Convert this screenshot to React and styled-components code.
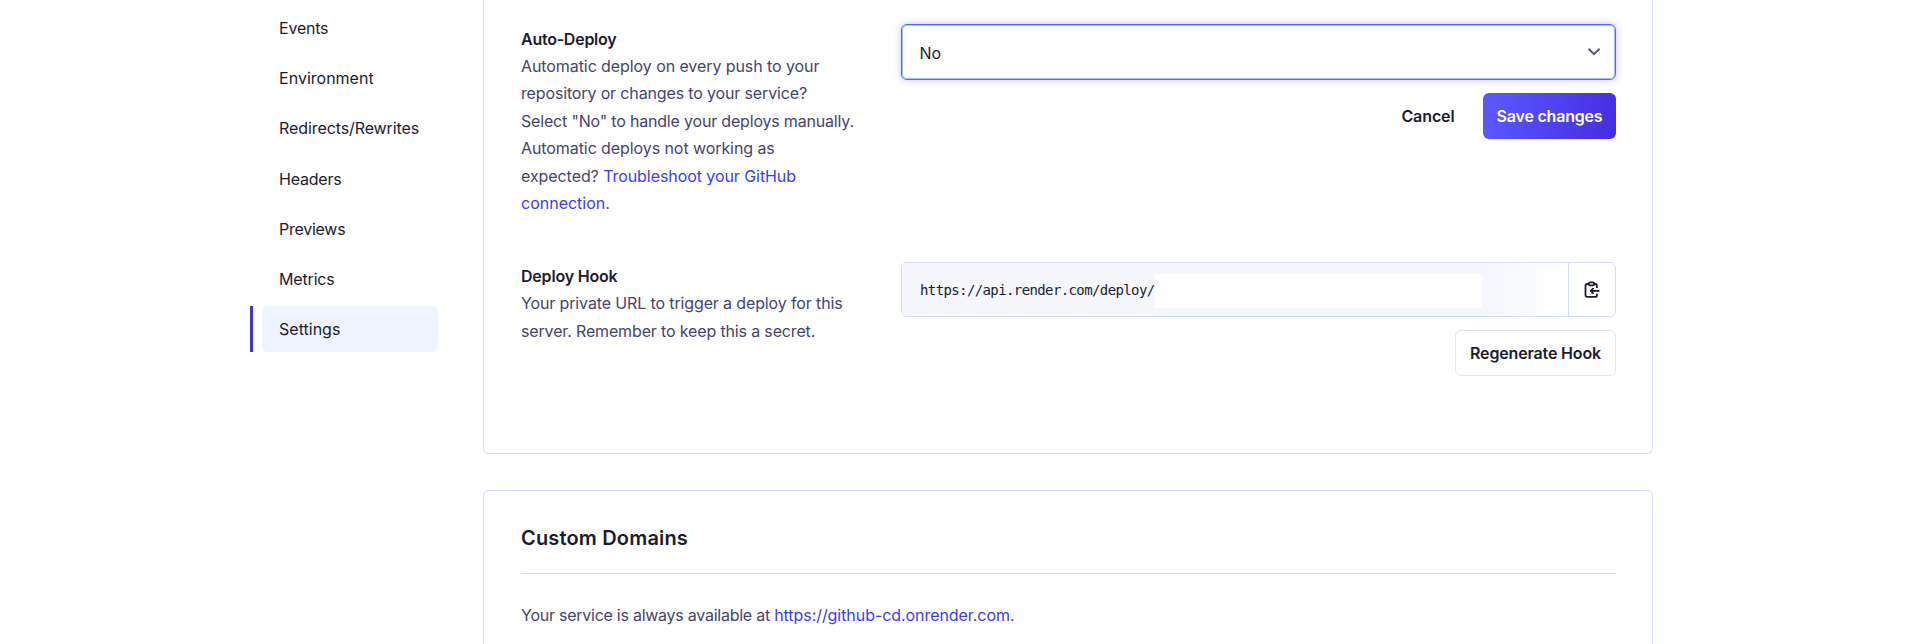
import React from 'react';
import styled, { createGlobalStyle } from 'styled-components';

const GlobalStyle = createGlobalStyle`
  * { box-sizing: border-box; }
  body {
    margin: 0;
    background: #fff;
    color: #1c1b2e;
    font: 400 16px/27.4px Inter, "Liberation Sans", sans-serif;
    overflow: hidden;
  }
  button { font: inherit; color: inherit; cursor: pointer; }
  a { color: #3c3cf0; text-decoration: none; }
`;

const Page = styled.div`
  display: flex;
  align-items: flex-start;
  gap: 45px;
  height: 644px;
  padding-left: 250px;
  overflow: hidden;
`;

const Sidebar = styled.nav`
  display: flex;
  flex-direction: column;
  gap: 4.2px;
  width: 188px;
  padding-top: 5px;
`;

const NavItem = styled.div`
  display: flex;
  gap: 8.6px;
  height: 46px;
  &::before {
    content: "";
    width: 3px;
    background: ${(p) => (p.$active ? '#4430e0' : 'transparent')};
  }
`;

const NavLink = styled.a`
  flex: 1;
  padding-left: 17.5px;
  border-radius: 6px;
  line-height: 46px;
  letter-spacing: ${(p) => p.$spacing || 0}px;
  color: #1c1b2e;
  background: ${(p) => (p.$active ? '#eef3ff' : 'transparent')};
`;

const Main = styled.main`
  display: flex;
  flex-direction: column;
  gap: 36px;
  width: 1170px;
`;

const Card = styled.section`
  padding: ${(p) => p.$padding};
  height: ${(p) => p.$height}px;
  flex: none;
  border: 1px solid #d2dcf5;
  border-top-width: ${(p) => (p.$cut ? 0 : 1)}px;
  border-radius: ${(p) => (p.$cut ? '0 0 6px 6px' : '6px')};
`;

const Setting = styled.div`
  display: grid;
  grid-template-columns: 350px 1fr;
  column-gap: 30px;
  height: ${(p) => p.$height}px;
`;

const Label = styled.h3`
  margin: 0;
  font-size: 16px;
  font-weight: 600;
  line-height: 27.4px;
  letter-spacing: ${(p) => p.$spacing || 0}px;
`;

const Line = styled.span`
  display: block;
  white-space: nowrap;
  color: #45446a;
  letter-spacing: ${(p) => p.$spacing || 0}px;
`;

const ServiceLink = styled.a`
  letter-spacing: -0.06px;
`;

const Info = styled.div`
  padding-top: ${(p) => p.$top}px;
`;

const Control = styled.div`
  display: flex;
  flex-direction: column;
  gap: 13px;
`;

const Select = styled.div`
  display: flex;
  align-items: center;
  justify-content: space-between;
  height: 56px;
  padding: 0 14px 0 17.5px;
  border: 1px solid #4a6ff0;
  border-radius: 6px;
  box-shadow: 0 0 0 1px #a9b9fa inset, 0 0 7px rgba(80, 70, 245, 0.35);
`;

const SelectValue = styled.span`
  padding-top: 3px;
`;

const Actions = styled.div`
  display: flex;
  justify-content: flex-end;
  gap: 16px;
`;

const Button = styled.button`
  height: 46px;
  width: ${(p) => p.$width}px;
  padding: 2px 0 0;
  border: ${(p) => (p.$outline ? '1px solid #dfe5fa' : '0')};
  border-radius: 6px;
  background: ${(p) => (p.$primary ? 'linear-gradient(105deg, #5957fd 10%, #452be0 100%)' : 'transparent')};
  color: ${(p) => (p.$primary ? '#fff' : '#1c1b2e')};
  font-weight: 600;
  letter-spacing: ${(p) => p.$spacing || 0}px;
  white-space: nowrap;
`;

const CopyField = styled.div`
  display: flex;
  height: 55px;
  border: 1px solid #d2dcf5;
  border-radius: 6px;
  overflow: hidden;
`;

const CopyValue = styled.div`
  display: flex;
  align-items: center;
  flex: 1;
  padding-left: 18px;
  background: linear-gradient(to right, #f5f7fc 88%, #fff 99%);
  font: 14px/20px "DejaVu Sans Mono", monospace;
  letter-spacing: -0.61px;
`;

const Url = styled.span`
  width: 235px;
  white-space: nowrap;
`;

const Redaction = styled.span`
  width: 327px;
  height: 34px;
  margin-top: 3px;
  background: #fff;
`;

const CopyButton = styled.button`
  display: grid;
  place-items: center;
  width: 47px;
  padding: 0 1px 0 0;
  border: 0;
  border-left: 1px solid #d2dcf5;
  background: #fff;
`;

const Heading = styled.h2`
  margin: 0;
  height: 46px;
  padding-top: 1px;
  font-size: 20px;
  font-weight: 600;
  line-height: 20px;
  letter-spacing: 0.17px;
`;

const Divider = styled.hr`
  height: 1px;
  margin: 0 0 28px;
  border: 0;
  background: #d2dcf5;
`;

const NAV = [
  ['Events', -0.25],
  ['Environment', 0],
  ['Redirects/Rewrites', -0.1],
  ['Headers', -0.22],
  ['Previews', -0.28],
  ['Metrics', -0.18],
  ['Settings', 0],
];

const ChevronIcon = () => (
  <svg width="14" height="10" viewBox="0 0 14 10" fill="none" stroke="#57566f" strokeWidth="1.9">
    <path d="M1.5 1.8 7 7.2l5.5-5.4" />
  </svg>
);

const ClipboardIcon = () => (
  <svg width="16" height="18" viewBox="0 0 16 18" fill="none" stroke="#1c1b2e" strokeWidth="1.8" strokeLinecap="round" strokeLinejoin="round">
    <path d="M4.6 3H3.2A1.7 1.7 0 0 0 1.5 4.7v9.5a1.7 1.7 0 0 0 1.7 1.7h8a1.7 1.7 0 0 0 1.7-1.7v-.9M10.4 3h.8a1.7 1.7 0 0 1 1.7 1.7v1.6" />
    <rect x="4.8" y="1.4" width="5.4" height="3" rx="1.2" />
    <path d="M14.7 9.9H6.8M9 7.6 6.7 9.9 9 12.2" />
  </svg>
);

export default function App() {
  return (
    <>
      <GlobalStyle />
      <Page>
        <Sidebar>
          {NAV.map(([name, spacing]) => (
            <NavItem key={name} $active={name === 'Settings'}>
              <NavLink $active={name === 'Settings'} $spacing={spacing}>{name}</NavLink>
            </NavItem>
          ))}
        </Sidebar>
        <Main>
          <Card $cut $height={454} $padding="24px 36px 0 37px">
            <Setting $height={238}>
              <Info $top={1.6}>
                <Label $spacing={-0.25}>Auto-Deploy</Label>
                <Line $spacing={-0.08}>Automatic deploy on every push to your</Line>
                <Line $spacing={-0.145}>repository or changes to your service?</Line>
                <Line $spacing={-0.185}>Select "No" to handle your deploys manually.</Line>
                <Line $spacing={-0.08}>Automatic deploys not working as</Line>
                <Line $spacing={-0.07}>expected? <a>Troubleshoot your GitHub</a></Line>
                <Line><a>connection.</a></Line>
              </Info>
              <Control>
                <Select>
                  <SelectValue>No</SelectValue>
                  <ChevronIcon />
                </Select>
                <Actions>
                  <Button $width={78} $spacing={-0.1}>Cancel</Button>
                  <Button $primary $width={133} $spacing={-0.2}>Save changes</Button>
                </Actions>
              </Control>
            </Setting>
            <Setting $height={120}>
              <Info $top={1}>
                <Label $spacing={-0.2}>Deploy Hook</Label>
                <Line $spacing={-0.13}>Your private URL to trigger a deploy for this</Line>
                <Line $spacing={-0.15}>server. Remember to keep this a secret.</Line>
              </Info>
              <Control>
                <CopyField>
                  <CopyValue>
                    <Url>https://api.render.com/deploy/</Url>
                    <Redaction />
                  </CopyValue>
                  <CopyButton aria-label="Copy">
                    <ClipboardIcon />
                  </CopyButton>
                </CopyField>
                <Actions>
                  <Button $outline $width={161} $spacing={-0.16}>Regenerate Hook</Button>
                </Actions>
              </Control>
            </Setting>
          </Card>
          <Card $height={240} $padding="36px 36px 0 37px">
            <Heading>Custom Domains</Heading>
            <Divider />
            <Line $spacing={-0.25}>Your service is always available at <ServiceLink>https://github-cd.onrender.com</ServiceLink>.</Line>
          </Card>
        </Main>
      </Page>
    </>
  );
}
